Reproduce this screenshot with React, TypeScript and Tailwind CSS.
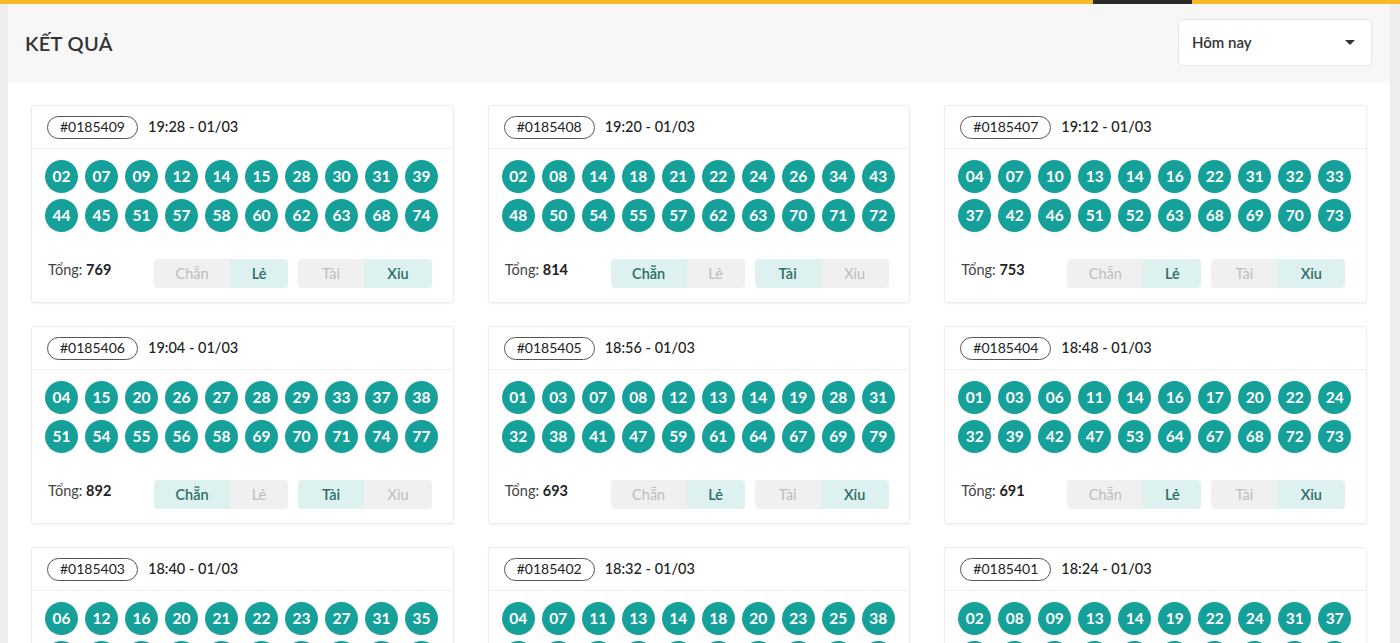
import React from "react";

type Draw = {
  id: string;
  time: string;
  nums: string[];
  total: number;
  even: boolean;
  big: boolean;
};

const draws: Draw[] = [
  { id: "#0185409", time: "19:28 - 01/03", nums: "02 07 09 12 14 15 28 30 31 39 44 45 51 57 58 60 62 63 68 74".split(" "), total: 769, even: false, big: false },
  { id: "#0185408", time: "19:20 - 01/03", nums: "02 08 14 18 21 22 24 26 34 43 48 50 54 55 57 62 63 70 71 72".split(" "), total: 814, even: true, big: true },
  { id: "#0185407", time: "19:12 - 01/03", nums: "04 07 10 13 14 16 22 31 32 33 37 42 46 51 52 63 68 69 70 73".split(" "), total: 753, even: false, big: false },
  { id: "#0185406", time: "19:04 - 01/03", nums: "04 15 20 26 27 28 29 33 37 38 51 54 55 56 58 69 70 71 74 77".split(" "), total: 892, even: true, big: true },
  { id: "#0185405", time: "18:56 - 01/03", nums: "01 03 07 08 12 13 14 19 28 31 32 38 41 47 59 61 64 67 69 79".split(" "), total: 693, even: false, big: false },
  { id: "#0185404", time: "18:48 - 01/03", nums: "01 03 06 11 14 16 17 20 22 24 32 39 42 47 53 64 67 68 72 73".split(" "), total: 691, even: false, big: false },
  { id: "#0185403", time: "18:40 - 01/03", nums: "06 12 16 20 21 22 23 27 31 35 40 44 49 52 58 61 66 70 75 78".split(" "), total: 864, even: true, big: true },
  { id: "#0185402", time: "18:32 - 01/03", nums: "04 07 11 13 14 18 20 23 25 38 41 45 50 53 57 60 64 69 72 76".split(" "), total: 780, even: true, big: false },
  { id: "#0185401", time: "18:24 - 01/03", nums: "02 08 09 13 14 19 22 24 31 37 43 46 48 55 59 62 65 68 71 77".split(" "), total: 793, even: false, big: false },
];

function Toggle({ label, active, w, left }: { label: string; active: boolean; w: string; left: boolean }) {
  return (
    <div
      className={
        "h-[29px] flex items-center justify-center text-[14.5px] " +
        w +
        " " +
        (left ? "rounded-l-[4px] " : "rounded-r-[4px] ") +
        (active ? "bg-[#ddf1f0] text-[#2e6e68] font-semibold" : "bg-[#f0f0f0] text-[#bdbdbd]")
      }
    >
      {label}
    </div>
  );
}

function Card({ d }: { d: Draw }) {
  return (
    <div className="bg-white border border-[#ececec] rounded-[3px] shadow-[0_1px_2px_rgba(0,0,0,0.05)]">
      <div className="h-[43px] px-[15px] flex items-center gap-[10px] border-b border-[#efefef]">
        <div className="h-[23px] px-[12px] border border-[#555] rounded-full flex items-center text-[14px] text-[#222] leading-none">
          {d.id}
        </div>
        <div className="text-[14.5px] font-medium text-[#222]">{d.time}</div>
      </div>
      <div className="px-[13px] pt-[11px] grid grid-cols-[repeat(10,32px)] gap-x-[8px] gap-y-[6px]">
        {d.nums.map((n, i) => (
          <div
            key={i}
            className="w-[33px] h-[33px] rounded-full bg-[#16a09a] text-white font-bold text-[15.5px] flex items-center justify-center"
          >
            {n}
          </div>
        ))}
      </div>
      <div className="mt-[27px] pb-[14px] pl-[16px] flex items-center">
        <div className="w-[106px] text-[14.5px] text-[#444] -mt-[8px]">
          Tổng: <span className="font-bold text-[#222]">{d.total}</span>
        </div>
        <div className="flex">
          <Toggle label="Chẵn" active={d.even} w="w-[76px]" left />
          <Toggle label="Lẻ" active={!d.even} w="w-[58px]" left={false} />
        </div>
        <div className="flex ml-[10px]">
          <Toggle label="Tài" active={d.big} w="w-[66px]" left />
          <Toggle label="Xỉu" active={!d.big} w="w-[68px]" left={false} />
        </div>
      </div>
    </div>
  );
}

export default function App() {
  return (
    <div
      className="h-[643px] w-[1400px] overflow-hidden bg-[#ededed] flex flex-col"
      style={{ fontFamily: "Lato, 'Noto Sans', sans-serif" }}
    >
      <div className="h-[4px] bg-[#f7b924] flex shrink-0">
        <div className="w-[1093px]" />
        <div className="w-[99px] bg-[#2a2a2a]" />
      </div>
      <div className="ml-[8px] w-[1382px] flex-1 bg-white rounded-tl-[4px] overflow-hidden">
        <div className="h-[79px] bg-[#f7f7f7] flex items-center justify-between pl-[17px] pr-[18px]">
          <div className="text-[20px] font-semibold text-[#333] tracking-[0.3px] -mt-[2px]">KẾT QUẢ</div>
          <div className="w-[194px] h-[47px] bg-white border border-[#e6e6e6] rounded-[4px] flex items-center justify-between pl-[13px] pr-[16px] -mt-[2px]">
            <span className="text-[15px] font-semibold text-[#333]">Hôm nay</span>
            <svg width="10" height="5" viewBox="0 0 10 5">
              <path d="M0 0 L10 0 L5 5 Z" fill="#333" />
            </svg>
          </div>
        </div>
        <div className="px-[23px] pt-[22px] grid grid-cols-3 gap-x-[34px] gap-y-[23px]">
          {draws.map((d) => (
            <Card key={d.id} d={d} />
          ))}
        </div>
      </div>
    </div>
  );
}
